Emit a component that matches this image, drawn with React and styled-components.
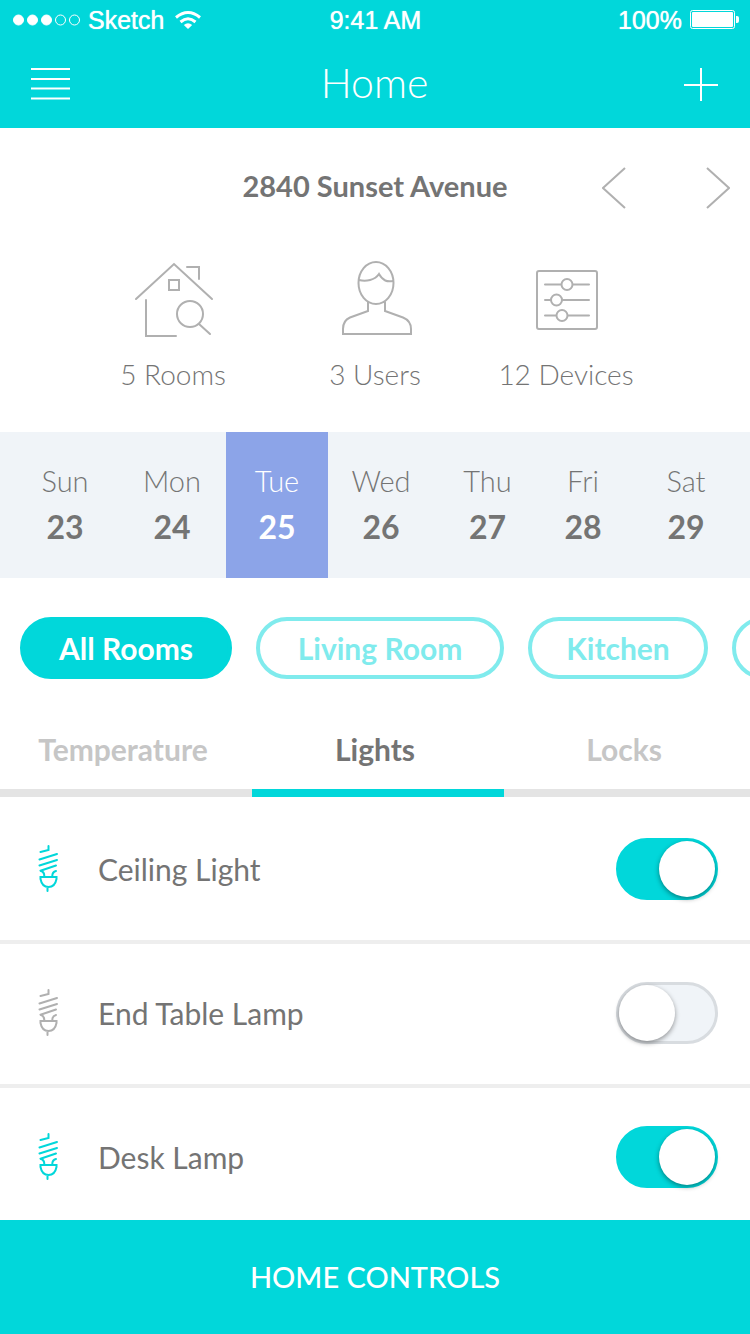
import React, { useState } from "react";
import styled, { createGlobalStyle, ThemeProvider } from "styled-components";

const theme = {
  teal: "#01d7da",
  tealSoft: "#80ebed",
  text: "#747474",
  muted: "#c6c6c6",
  line: "#b0b0b0",
  strip: "#f0f4f8",
  selected: "#8ca4e8",
};

const GlobalStyle = createGlobalStyle`
  *, *::before, *::after { box-sizing: border-box; }
  body { margin: 0; background: #fff; }
  button { border: 0; padding: 0; background: none; font: inherit; color: inherit; cursor: pointer; }
  svg { display: block; }
`;

const Page = styled.div`
  display: flex;
  flex-direction: column;
  height: 100vh;
  overflow: hidden;
  font-family: Lato, "Open Sans", sans-serif;
  font-size: 28px;
  line-height: 36px;
  color: ${({ theme }) => theme.text};
`;

const Header = styled.header`
  flex: none;
  background: ${({ theme }) => theme.teal};
  color: #fff;
`;

const StatusBar = styled.div`
  display: grid;
  grid-template-columns: 1fr auto 1fr;
  align-items: center;
  height: 40px;
  padding: 0 11px 0 12px;
  font-family: "Liberation Sans", Arial, sans-serif;
  font-size: 25px;
  line-height: 40px;
  text-shadow: 0 0 1px #fff;
`;

const StatusGroup = styled.div`
  display: flex;
  align-items: center;
  justify-content: ${({ $end }) => ($end ? "flex-end" : "flex-start")};
  gap: 8px;
`;

const NavBar = styled.nav`
  display: grid;
  grid-template-columns: 1fr auto 1fr;
  align-items: center;
  height: 88px;
  padding: 0 32px 0 31px;
`;

const NavTitle = styled.h1`
  margin: 0;
  padding-bottom: 2px;
  font-size: 41px;
  line-height: 48px;
  font-weight: 300;
`;

const IconButton = styled.button`
  display: flex;
  justify-self: ${({ $end }) => ($end ? "end" : "start")};
`;

const Content = styled.main`
  flex: 1;
  min-height: 0;
  overflow-y: auto;
  scrollbar-width: none;
`;

const AddressBar = styled.section`
  display: grid;
  grid-template-columns: 1fr auto 1fr;
  align-items: center;
  height: 120px;
  padding: 0 20px;
`;

const Address = styled.h2`
  grid-column: 2;
  margin: 0;
  padding-bottom: 4px;
  font-size: 29px;
  line-height: 36px;
  font-weight: 700;
`;

const Pager = styled.div`
  display: flex;
  justify-content: flex-end;
  gap: 80px;
  color: ${({ theme }) => theme.line};
`;

const Stats = styled.section`
  display: grid;
  grid-template-columns: 202fr 202fr 180fr;
  padding: 12px 94px 40px 72px;
`;

const Stat = styled.div`
  display: flex;
  flex-direction: column;
  align-items: center;
  gap: 16px;
  font-weight: 300;

  svg { color: ${({ theme }) => theme.line}; }
`;

const Week = styled.section`
  display: grid;
  grid-template-columns: 106fr 108fr 102fr 106fr 107fr 84fr 122fr;
  padding: 0 3px 0 12px;
  background: ${({ theme }) => theme.strip};
`;

const Day = styled.button`
  display: flex;
  flex-direction: column;
  align-items: center;
  justify-content: center;
  gap: 6px;
  height: 146px;
  padding-top: 2px;
  background: ${({ $selected, theme }) => ($selected ? theme.selected : "transparent")};
  color: ${({ $selected, theme }) => ($selected ? "#fff" : theme.text)};
  font-size: 29px;
  font-weight: 300;

  strong {
    font-size: 32px;
    line-height: 44px;
    font-weight: 700;
  }
`;

const Chips = styled.section`
  display: flex;
  gap: 24px;
  padding: 39px 0 24px 20px;
  overflow: hidden;
`;

const Chip = styled.button`
  flex: 0 0 ${({ $width }) => $width}px;
  height: 62px;
  border: 4px solid ${({ $active, theme }) => ($active ? theme.teal : theme.tealSoft)};
  border-radius: 31px;
  background: ${({ $active, theme }) => ($active ? theme.teal : "transparent")};
  color: ${({ $active, theme }) => ($active ? "#fff" : theme.tealSoft)};
  font-size: 30px;
  font-weight: 700;
`;

const Tabs = styled.div`
  display: grid;
  grid-template-columns: 252fr 252fr 246fr;
`;

const Tab = styled.button`
  height: 94px;
  padding: 6px 6px 0 0;
  border-bottom: 8px solid ${({ $active, theme }) => ($active ? theme.teal : "#e4e4e4")};
  color: ${({ $active, theme }) => ($active ? theme.text : theme.muted)};
  font-size: 30px;
  font-weight: 700;
`;

const DeviceList = styled.ul`
  margin: 0;
  padding: 3px 0 0;
  list-style: none;
`;

const DeviceRow = styled.li`
  display: flex;
  align-items: center;
  gap: 40px;
  height: 144px;
  padding: 0 32px 2px 38px;
  border-bottom: 4px solid #eee;

  svg { color: ${({ $on, theme }) => ($on ? theme.teal : theme.line)}; }
`;

const DeviceName = styled.label`
  flex: 1;
  font-size: 30px;
`;

const Switch = styled.input`
  appearance: none;
  display: flex;
  justify-content: flex-start;
  width: 102px;
  height: 62px;
  margin: 0;
  border: 3px solid #d8dce0;
  border-radius: 31px;
  background: ${({ theme }) => theme.strip};
  cursor: pointer;

  &::before {
    content: "";
    width: 56px;
    height: 56px;
    border-radius: 50%;
    background: #fff;
    box-shadow: 0 2px 5px rgba(0, 0, 0, 0.4);
  }

  &:checked {
    justify-content: flex-end;
    border-color: ${({ theme }) => theme.teal};
    background: ${({ theme }) => theme.teal};
  }
`;

const ControlsButton = styled.button`
  flex: none;
  height: 114px;
  background: ${({ theme }) => theme.teal};
  color: #fff;
  font-size: 29px;
  font-weight: 500;
`;

const SignalIcon = () => (
  <svg width="68" height="14" viewBox="0 0 68 14" aria-hidden="true">
    {[0, 1, 2, 3, 4].map((i) => (
      <circle key={i} cx={6.5 + i * 14} cy="7" r={i < 3 ? 5 : 5} fill={i < 3 ? "#fff" : "none"} stroke="#fff" />
    ))}
  </svg>
);

const WifiIcon = () => (
  <svg width="30" height="20" viewBox="-3 0 30 20" fill="none" stroke="#fff" strokeWidth="3" aria-hidden="true">
    <path d="M1 7.5Q13 -2.5 25 7.5" />
    <path d="M5.5 12Q13 5.5 20.5 12" />
    <path d="M13 19L8.8 15Q13 11.5 17.2 15Z" fill="#fff" stroke="none" />
  </svg>
);

const BatteryIcon = () => (
  <svg width="49" height="20" viewBox="0 0 49 20" aria-hidden="true">
    <rect x="0.5" y="0.5" width="44" height="18" rx="2" fill="none" stroke="#fff" />
    <rect x="2" y="2" width="41" height="15" rx="1" fill="#fff" />
    <path d="M46 6h1q2 0 2 2v3q0 2-2 2h-1z" fill="#fff" />
  </svg>
);

const MenuIcon = () => (
  <svg width="39" height="36" viewBox="0 0 39 36" fill="none" stroke="#fff" strokeWidth="2" aria-hidden="true">
    <path d="M0 3H39M0 13H39M0 22.5H39M0 32.5H39" />
  </svg>
);

const PlusIcon = () => (
  <svg width="34" height="34" viewBox="0 0 34 34" fill="none" stroke="#fff" strokeWidth="2" aria-hidden="true">
    <path d="M17 1V34M0 18H34" />
  </svg>
);

const Chevron = ({ right }) => (
  <svg width="24" height="42" viewBox="0 0 24 42" fill="none" stroke="currentColor" strokeWidth="2" aria-hidden="true">
    <path d={right ? "M1 1L23 21L1 41" : "M23 1L1 21L23 41"} />
  </svg>
);

const StatIcon = ({ children }) => (
  <svg
    width="84"
    height="80"
    viewBox="0 0 84 80"
    fill="none"
    stroke="currentColor"
    strokeWidth="2"
    strokeLinecap="round"
    aria-hidden="true"
  >
    {children}
  </svg>
);

const HouseIcon = () => (
  <StatIcon>
    <path d="M5 39L43 4L81 39" />
    <path d="M56 7H68V19" />
    <rect x="38" y="20" width="10" height="10" />
    <path d="M15 40V76H45" />
    <circle cx="59" cy="54" r="13" />
    <path d="M68 64L79 74" />
  </StatIcon>
);

const UserIcon = () => (
  <StatIcon>
    <ellipse cx="43" cy="23" rx="17.5" ry="21" />
    <path d="M26 20C33 22 42 20 46 14C50 21 54 22 60 21" />
    <path d="M35 42V51L17 57.5C11 60 10 64 10 69V74H78V69C78 64 76 60 70 57.5L52 51V42" />
  </StatIcon>
);

const DevicesIcon = () => (
  <StatIcon>
    <rect x="13" y="11" width="60" height="58" rx="2" />
    <path d="M21 24.5H37M49 24.5H65M21 40H27M38 40H65M21 55.5H32M44 55.5H65" />
    <circle cx="43" cy="24.5" r="5.5" />
    <circle cx="32.5" cy="40" r="5.5" />
    <circle cx="38" cy="55.5" r="5.5" />
  </StatIcon>
);

const BulbIcon = () => (
  <svg
    width="20"
    height="48"
    viewBox="0 1 20 48"
    fill="none"
    stroke="currentColor"
    strokeWidth="2"
    strokeLinecap="round"
    aria-hidden="true"
  >
    <path d="M2.5 8L10.5 6V2M1.5 15.5L19 10M1.5 21.5L19 16M2.5 26.7L18 21.5" />
    <path d="M3 27Q6.3 28 6.3 32M18 27Q14.3 28 14.3 32" />
    <path d="M2.5 33H18.5V35Q17 43 10.5 43Q4 43 2.5 35ZM9.5 43V47" />
  </svg>
);

const DAYS = [
  ["Sun", 23],
  ["Mon", 24],
  ["Tue", 25],
  ["Wed", 26],
  ["Thu", 27],
  ["Fri", 28],
  ["Sat", 29],
];

const ROOMS = [
  { name: "All Rooms", width: 212 },
  { name: "Living Room", width: 248 },
  { name: "Kitchen", width: 180 },
];

const LIGHTS = [
  { id: "ceiling", name: "Ceiling Light", on: true },
  { id: "end-table", name: "End Table Lamp", on: false },
  { id: "desk", name: "Desk Lamp", on: true },
];

export default function App() {
  const [day, setDay] = useState(25);
  const [room, setRoom] = useState("All Rooms");
  const [tab, setTab] = useState("Lights");
  const [lights, setLights] = useState(LIGHTS);

  const toggle = (id) =>
    setLights((all) => all.map((l) => (l.id === id ? { ...l, on: !l.on } : l)));

  return (
    <ThemeProvider theme={theme}>
      <GlobalStyle />
      <Page>
        <Header>
          <StatusBar>
            <StatusGroup>
              <SignalIcon />
              <span>Sketch</span>
              <WifiIcon />
            </StatusGroup>
            <span>9:41 AM</span>
            <StatusGroup $end>
              <span>100%</span>
              <BatteryIcon />
            </StatusGroup>
          </StatusBar>
          <NavBar>
            <IconButton aria-label="Menu"><MenuIcon /></IconButton>
            <NavTitle>Home</NavTitle>
            <IconButton $end aria-label="Add"><PlusIcon /></IconButton>
          </NavBar>
        </Header>

        <Content>
          <AddressBar>
            <Address>2840 Sunset Avenue</Address>
            <Pager>
              <IconButton aria-label="Previous home"><Chevron /></IconButton>
              <IconButton aria-label="Next home"><Chevron right /></IconButton>
            </Pager>
          </AddressBar>

          <Stats>
            <Stat><HouseIcon /><span>5 Rooms</span></Stat>
            <Stat><UserIcon /><span>3 Users</span></Stat>
            <Stat><DevicesIcon /><span>12 Devices</span></Stat>
          </Stats>

          <Week>
            {DAYS.map(([name, date]) => (
              <Day key={date} $selected={day === date} onClick={() => setDay(date)}>
                <span>{name}</span>
                <strong>{date}</strong>
              </Day>
            ))}
          </Week>

          <Chips>
            {ROOMS.map(({ name, width }) => (
              <Chip key={name} $width={width} $active={room === name} onClick={() => setRoom(name)}>
                {name}
              </Chip>
            ))}
            <Chip $width={180} aria-label="More rooms" />
          </Chips>

          <Tabs role="tablist">
            {["Temperature", "Lights", "Locks"].map((name) => (
              <Tab
                key={name}
                role="tab"
                aria-selected={tab === name}
                $active={tab === name}
                onClick={() => setTab(name)}
              >
                {name}
              </Tab>
            ))}
          </Tabs>

          <DeviceList>
            {lights.map(({ id, name, on }) => (
              <DeviceRow key={id} $on={on}>
                <BulbIcon />
                <DeviceName htmlFor={id}>{name}</DeviceName>
                <Switch type="checkbox" role="switch" id={id} checked={on} onChange={() => toggle(id)} />
              </DeviceRow>
            ))}
          </DeviceList>
        </Content>

        <ControlsButton>HOME CONTROLS</ControlsButton>
      </Page>
    </ThemeProvider>
  );
}
